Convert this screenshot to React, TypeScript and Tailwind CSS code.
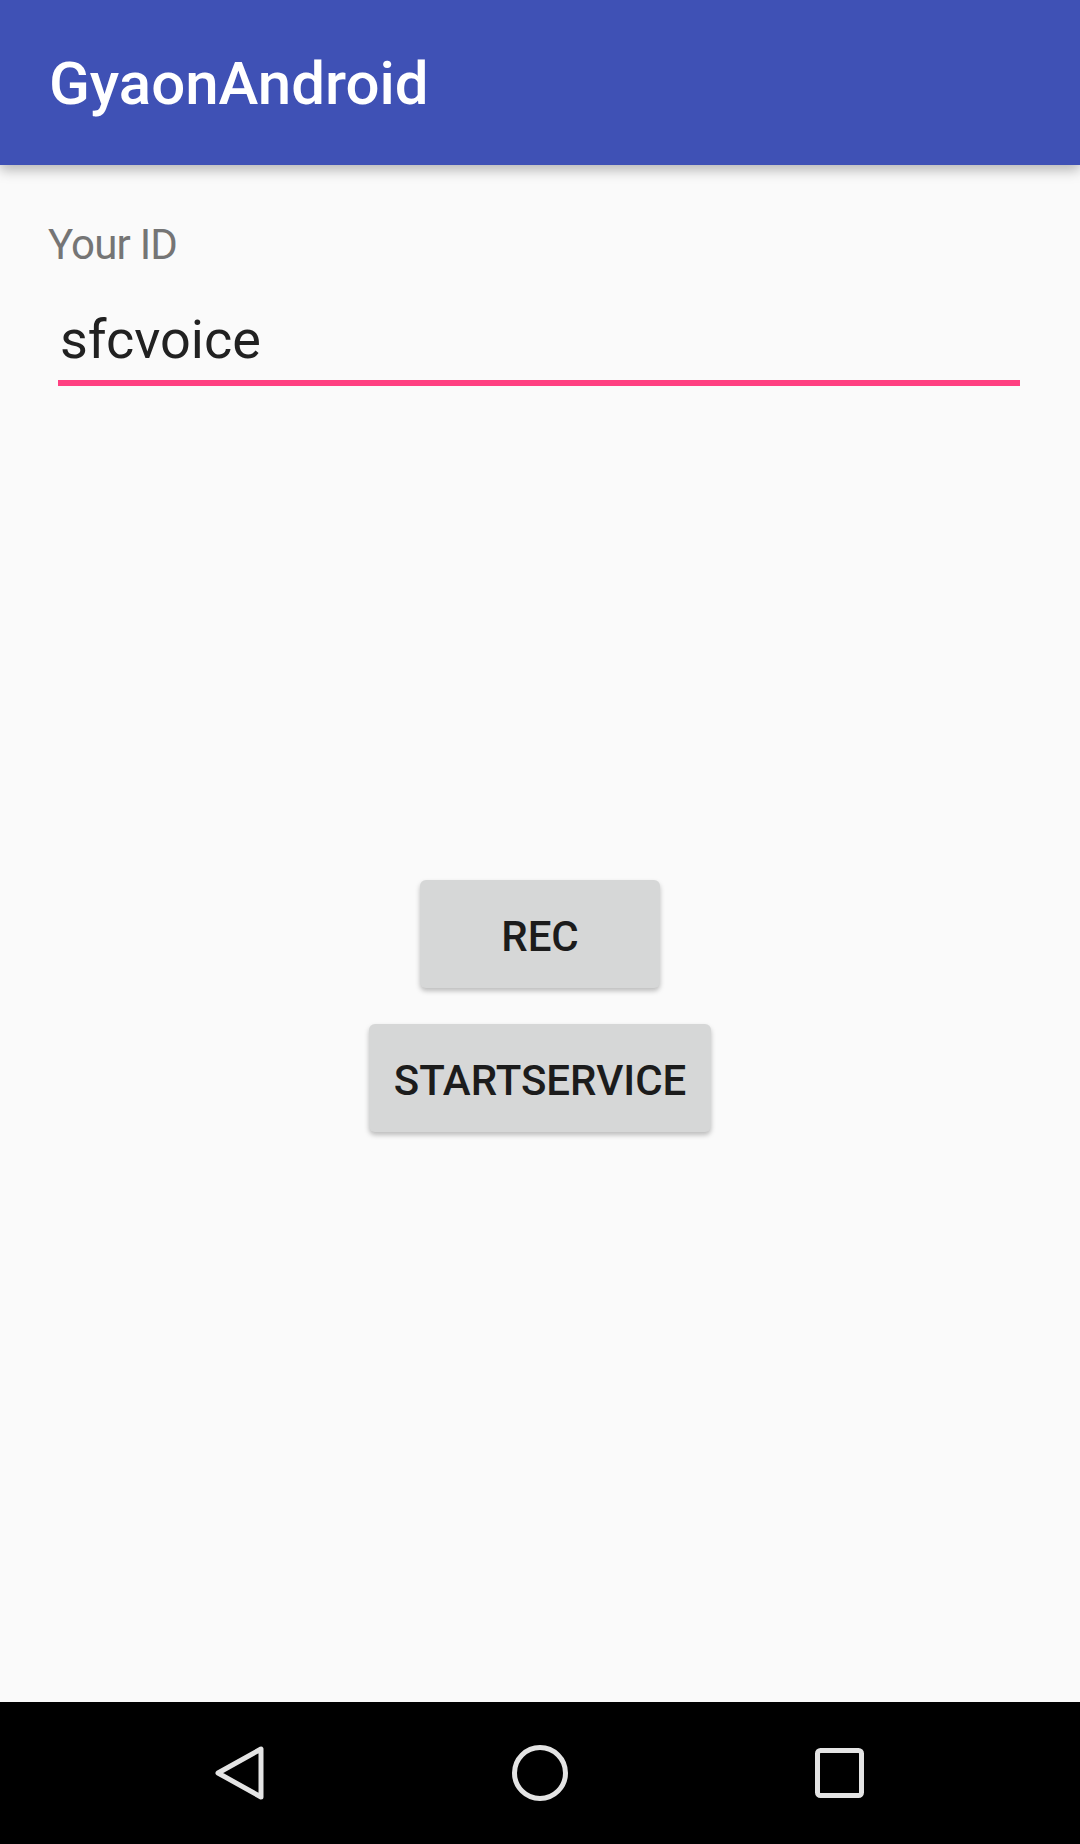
const roboto = { fontFamily: "Roboto, 'Liberation Sans', sans-serif" };

const NavBar = () => (
  <div className="h-[142px] bg-black flex items-center justify-center gap-[200px]">
    <div className="w-[100px] h-[60px] flex items-center justify-center">
      <svg width="60" height="60" viewBox="0 0 60 60" fill="none">
        <path d="M8 30 L51 6 L51 54 Z" stroke="#e4e4e4" strokeWidth="5" strokeLinejoin="round" />
      </svg>
    </div>
    <div className="w-[100px] h-[60px] flex items-center justify-center">
      <svg width="60" height="60" viewBox="0 0 60 60" fill="none">
        <circle cx="30" cy="30" r="25.5" stroke="#e4e4e4" strokeWidth="5" />
      </svg>
    </div>
    <div className="w-[100px] h-[60px] flex items-center justify-center">
      <svg width="50" height="50" viewBox="0 0 50 50" fill="none">
        <rect x="2.5" y="2.5" width="44" height="45" rx="3" stroke="#e4e4e4" strokeWidth="5" />
      </svg>
    </div>
  </div>
);

const Button = ({ label }: { label: string }) => (
  <button
    className="h-[108px] min-w-[240px] px-[25px] pt-[36px] self-center flex justify-center bg-[#d6d7d7] rounded-[6px] shadow-[0_3px_5px_rgba(0,0,0,0.25)] text-[42px] leading-[42px] font-medium text-[#1c1c1c]"
    style={roboto}
  >
    {label}
  </button>
);

export default function App() {
  return (
    <div className="w-[1080px] h-[1844px] flex flex-col bg-[#fafafa]" style={roboto}>
      <header className="relative z-10 h-[165px] shrink-0 bg-[#3f51b5] pl-[49px] pt-[54px] shadow-[0_5px_12px_rgba(0,0,0,0.28)]">
        <h1 className="text-[60px] leading-[60px] font-medium text-white">GyaonAndroid</h1>
      </header>

      <main className="flex-1 flex flex-col px-[48px]">
        <label className="mt-[59px] text-[42px] leading-[42px] tracking-[-0.8px] text-[#757575]">Your ID</label>
        <div className="mt-[47px] ml-[12px] text-[54px] leading-[54px] text-[#212121]">sfcvoice</div>
        <div className="mt-[13px] ml-[10px] mr-[12px] h-[6px] bg-[#ff4081]" />

        <div className="mt-[494px] flex flex-col gap-[36px]">
          <Button label="REC" />
          <Button label="STARTSERVICE" />
        </div>
      </main>

      <NavBar />
    </div>
  );
}
